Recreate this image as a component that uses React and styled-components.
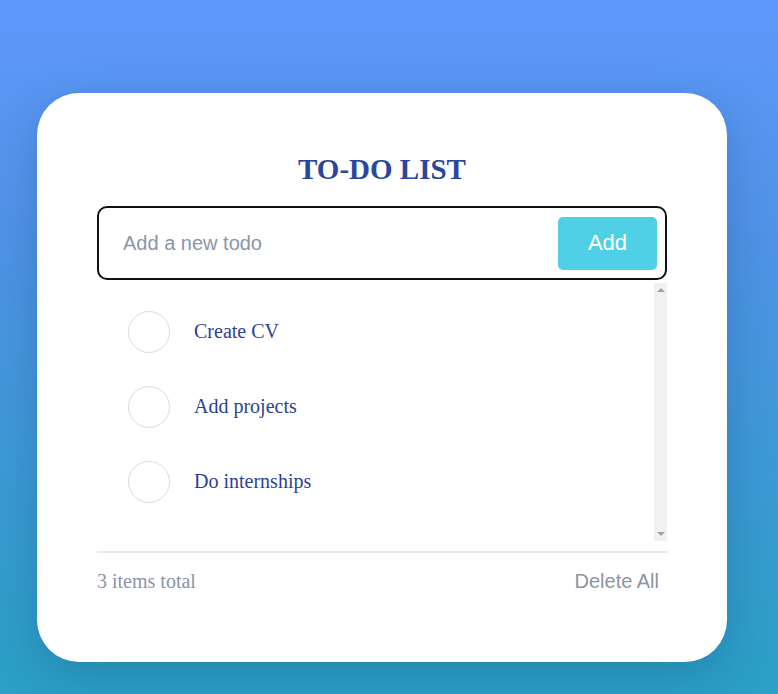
import React, { useState } from 'react';
import styled, { createGlobalStyle } from 'styled-components';

const GlobalStyle = createGlobalStyle`
  html, body {
    margin: 0;
    padding: 0;
  }
  body {
    min-height: 694px;
    background: linear-gradient(180deg, #5f98fb 0%, #4f93e6 35%, #2aa0c4 100%);
    font-family: "Liberation Serif", "Times New Roman", serif;
  }
`;

const initialTodos = [
  { id: 1, text: 'Create CV', done: false },
  { id: 2, text: 'Add projects', done: false },
  { id: 3, text: 'Do internships', done: false }
];

export default function App() {
  const [todos, setTodos] = useState(initialTodos);
  const [value, setValue] = useState('');

  const add = () => {
    if (!value.trim()) return;
    setTodos([...todos, { id: Date.now(), text: value.trim(), done: false }]);
    setValue('');
  };

  const toggle = id =>
    setTodos(todos.map(t => (t.id === id ? { ...t, done: !t.done } : t)));

  return (
    <Page>
      <GlobalStyle />
      <Card>
        <Title>TO-DO LIST</Title>

        <InputRow>
          <TodoInput
            placeholder="Add a new todo"
            value={value}
            onChange={e => setValue(e.target.value)}
            onKeyDown={e => e.key === 'Enter' && add()}
          />
          <AddButton onClick={add}>Add</AddButton>
        </InputRow>

        <ListArea>
          <List>
            {todos.map(todo => (
              <Item key={todo.id} onClick={() => toggle(todo.id)}>
                <Check done={todo.done} />
                <ItemText done={todo.done}>{todo.text}</ItemText>
              </Item>
            ))}
          </List>
          {/* scrollbars are hidden in the renderer, so the track is drawn */}
          <ScrollTrack>
            <Arrow />
            <Arrow down />
          </ScrollTrack>
        </ListArea>

        <Footer>
          <Count>{todos.length} items total</Count>
          <DeleteAll onClick={() => setTodos([])}>Delete All</DeleteAll>
        </Footer>
      </Card>
    </Page>
  );
}

const Page = styled.div`
  display: flex;
  padding: 93px 0 0 37px;
`;

const Card = styled.div`
  width: 690px;
  height: 569px;
  box-sizing: border-box;
  padding: 55px 60px 0;
  background: #fff;
  border-radius: 42px;
  box-shadow: 0 12px 45px rgba(10, 40, 90, 0.22);
`;

const Title = styled.h1`
  margin: 0 0 16px;
  text-align: center;
  font-family: "Liberation Serif", "Times New Roman", serif;
  font-size: 29px;
  font-weight: 700;
  line-height: 42px;
  color: #2a469e;
`;

const InputRow = styled.div`
  display: flex;
  align-items: center;
  height: 74px;
  box-sizing: border-box;
  padding: 0 8px 0 22px;
  border: 2px solid #111;
  border-radius: 10px;
`;

const TodoInput = styled.input`
  flex: 1;
  border: none;
  outline: none;
  background: transparent;
  font-family: "Liberation Sans", Arial, sans-serif;
  font-size: 20px;
  color: #333;

  &::placeholder {
    color: #8a95a8;
  }
`;

const AddButton = styled.button`
  width: 99px;
  height: 53px;
  border: none;
  border-radius: 5px;
  background: #4fd0e6;
  color: #fff;
  font-family: "Liberation Sans", Arial, sans-serif;
  font-size: 22px;
  cursor: pointer;
`;

const ListArea = styled.div`
  display: flex;
  height: 258px;
  margin-top: 3px;
`;

const List = styled.ul`
  flex: 1;
  list-style: none;
  margin: 0;
  padding: 11px 0 0;
  overflow-y: auto;
`;

const ScrollTrack = styled.div`
  width: 13px;
  display: flex;
  flex-direction: column;
  justify-content: space-between;
  align-items: center;
  padding: 5px 0;
  background: #f1f1f1;
`;

const Arrow = styled.span`
  width: 0;
  height: 0;
  border-left: 4px solid transparent;
  border-right: 4px solid transparent;
  ${p =>
    p.down
      ? 'border-top: 4px solid #a3a3a3;'
      : 'border-bottom: 4px solid #a3a3a3;'}
`;

const Item = styled.li`
  display: flex;
  align-items: center;
  height: 75px;
  padding-left: 31px;
  cursor: pointer;
`;

const Check = styled.span`
  width: 40px;
  height: 40px;
  border-radius: 50%;
  border: 1px solid #dcdcdc;
  background: ${p => (p.done ? '#4fd0e6' : '#fff')};
  flex-shrink: 0;
`;

const ItemText = styled.span`
  margin-left: 24px;
  font-size: 20px;
  color: #2e3f8f;
  text-decoration: ${p => (p.done ? 'line-through' : 'none')};
`;

const Footer = styled.div`
  display: flex;
  justify-content: space-between;
  align-items: center;
  margin-top: 10px;
  padding: 17px 8px 0 0;
  border-top: 2px solid #e8e8e8;
`;

const Count = styled.span`
  font-size: 20px;
  color: #8a94a6;
`;

const DeleteAll = styled.button`
  padding: 0;
  border: none;
  background: none;
  font-family: "Liberation Sans", Arial, sans-serif;
  font-size: 20px;
  color: #8a94a6;
  cursor: pointer;
`;
